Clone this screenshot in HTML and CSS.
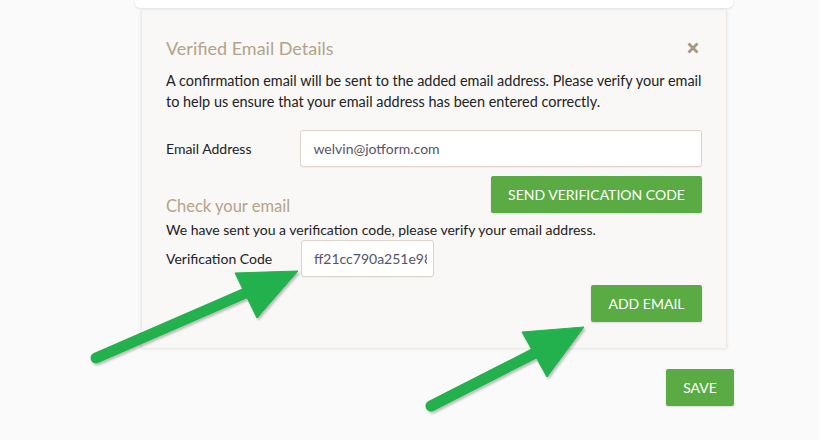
FILE: index.html
```html
<!DOCTYPE html>
<html>
<head>
<meta charset="utf-8">
<link rel="stylesheet" href="styles.css">
</head>
<body>
<div class="top-card"></div>
<div class="panel">
  <div class="panel-head">
    <h2 class="title">Verified Email Details</h2>
    <svg class="close" width="12" height="12" viewBox="0 0 12 12"><path d="M1.5 1.5 L10.5 10.5 M10.5 1.5 L1.5 10.5" stroke="#a89882" stroke-width="2.8" stroke-linecap="butt"/></svg>
  </div>
  <p class="desc">A confirmation email will be sent to the added email address. Please verify your email to help us ensure that your email address has been entered correctly.</p>
  <div class="field">
    <label class="label">Email Address</label>
    <input class="input input-wide" type="text" value="welvin@jotform.com">
  </div>
  <div class="row-send">
    <h2 class="subtitle">Check your email</h2>
    <button class="btn btn-send">SEND VERIFICATION CODE</button>
  </div>
  <p class="desc2">We have sent you a verification code, please verify your email address.</p>
  <div class="field">
    <label class="label">Verification Code</label>
    <input class="input input-code" type="text" value="ff21cc790a251e98">
  </div>
  <div class="row-add">
    <button class="btn btn-add">ADD EMAIL</button>
  </div>
</div>
<div class="save-row">
  <button class="btn btn-save">SAVE</button>
</div>
<svg class="arrows" width="819" height="440" viewBox="0 0 819 440">
  <defs>
    <filter id="sh" x="-10%" y="-10%" width="130%" height="130%">
      <feDropShadow dx="1.5" dy="2" stdDeviation="1" flood-color="#000" flood-opacity="0.25"/>
    </filter>
  </defs>
  <g fill="#23b14d" stroke="#23b14d" filter="url(#sh)">
    <line x1="96" y1="358" x2="248" y2="292" stroke-width="11" stroke-linecap="round"/>
    <polygon points="298,271 235,273 257,318" stroke-width="1" stroke-linejoin="round"/>
    <line x1="431" y1="406" x2="537" y2="352" stroke-width="11" stroke-linecap="round"/>
    <polygon points="584,327 522,332 547,377" stroke-width="1" stroke-linejoin="round"/>
  </g>
</svg>
</body>
</html>
```
FILE: styles.css
```css
html, body {
  margin: 0;
  padding: 0;
}
body {
  width: 819px;
  height: 440px;
  overflow: hidden;
  background: #fafafa;
  font-family: "Lato", "Open Sans", sans-serif;
  position: relative;
  color: #222;
}
.top-card {
  margin-left: 135px;
  width: 598px;
  height: 8px;
  background: #fff;
  border-radius: 0 0 5px 5px;
  box-shadow: 0 1px 3px rgba(0,0,0,0.12);
}
.panel {
  margin-left: 141px;
  margin-top: 3px;
  width: 586px;
  box-sizing: border-box;
  padding: 25px 24px 25px 24px;
  background: #f9f8f6;
  border-right: 1px solid #ece8e3;
  border-left: 1px solid #ece8e3;
  box-shadow: 0 1px 3px rgba(0,0,0,0.10);
  height: 337px;
}
.panel-head {
  display: flex;
  justify-content: space-between;
  align-items: center;
}
.title {
  margin: 0;
  font-weight: 400;
  font-size: 18px;
  line-height: 24px;
  color: #b4a38b;
}
.close {
  margin-right: 3px;
  display: block;
}
.desc {
  margin: 10px 0 0 0;
  font-size: 14.45px;
  line-height: 21px;
  color: #222;
}
.desc + .field {
  margin-top: 18px;
}
.field {
  display: flex;
  align-items: center;
}
.label {
  width: 135px;
  font-size: 14px;
  color: #222;
}
.input {
  box-sizing: border-box;
  height: 37px;
  border: 1px solid #ddd4cb;
  border-radius: 3px;
  background: #fff;
  padding: 0 12px;
  font-family: "Lato", "Open Sans", sans-serif;
  font-size: 14px;
  color: #57536a;
  box-shadow: 0 1px 1px rgba(0,0,0,0.04);
}
.input-wide {
  width: 403px;
}
.input-code {
  width: 133px;
  padding-right: 6px;
}
.row-send {
  display: flex;
  justify-content: space-between;
  align-items: flex-end;
  margin-top: 9px;
}
.subtitle {
  margin: 0 0 -5px 0;
  font-weight: 400;
  font-size: 16.5px;
  line-height: 24px;
  color: #b4a38b;
}
.btn {
  border: none;
  border-radius: 2px;
  background: #5bab45;
  color: #fff;
  font-family: "Lato", "Open Sans", sans-serif;
  font-size: 14px;
  padding: 0;
  height: 37px;
  box-shadow: 0 1px 2px rgba(0,0,0,0.12);
}
.btn-send {
  width: 211px;
}
.desc2 {
  margin: 6px 0 0 0;
  font-size: 14px;
  line-height: 21px;
  color: #222;
}
.row-add {
  display: flex;
  justify-content: flex-end;
  margin-top: 8px;
}
.btn-add {
  width: 111px;
}
.save-row {
  margin-top: 21px;
  margin-left: 666px;
}
.btn-save {
  width: 68px;
}
.arrows {
  position: absolute;
  left: 0;
  top: 0;
  pointer-events: none;
}
```
